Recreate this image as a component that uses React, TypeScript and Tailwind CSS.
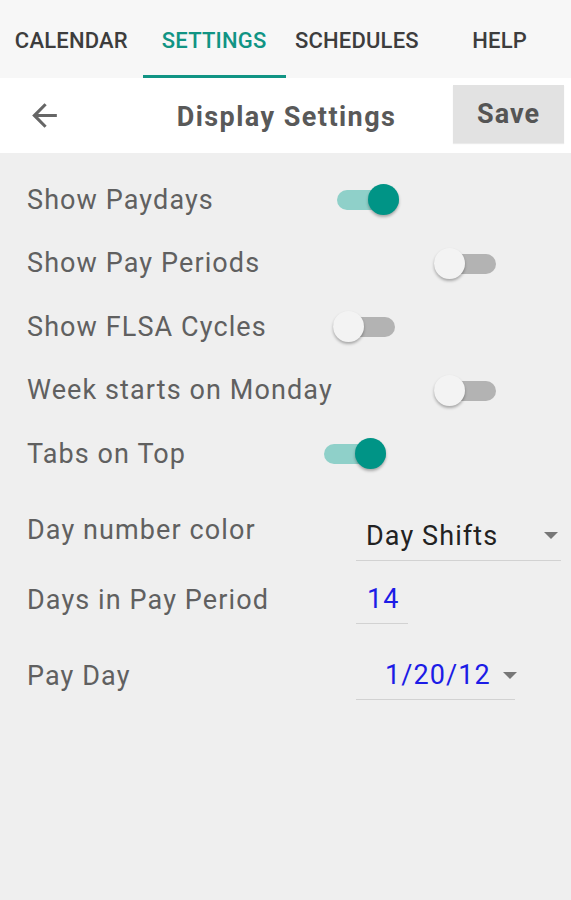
import { useState } from 'react';

const tabs = ['Calendar', 'Settings', 'Schedules', 'Help'];

const toggles = [
  { label: 'Show Paydays', on: true, w: 'w-[310px]' },
  { label: 'Show Pay Periods', on: false, w: 'w-[407px]' },
  { label: 'Show FLSA Cycles', on: false, w: 'w-[306px]' },
  { label: 'Week starts on Monday', on: false, w: 'w-[407px]' },
  { label: 'Tabs on Top', on: true, w: 'w-[297px]' },
];

function Toggle({ on, onClick }: { on: boolean; onClick: () => void }) {
  return (
    <button onClick={onClick} className="relative w-[62px] h-[31px] shrink-0">
      <span
        className={`absolute inset-x-0 top-[6px] h-[20px] rounded-full ${on ? 'bg-[#8fd0c9]' : 'bg-[#b3b3b3]'}`}
      />
      <span
        className={`absolute top-0 w-[31px] h-[31px] rounded-full shadow-[0_2px_3px_rgba(0,0,0,0.3)] ${
          on ? 'right-0 bg-[#009486]' : 'left-0 bg-[#f3f3f3]'
        }`}
      />
    </button>
  );
}

function Caret() {
  return (
    <svg width="14" height="8" viewBox="0 0 14 8" className="shrink-0">
      <path d="M0 0h14L7 7z" fill="#777" />
    </svg>
  );
}

export default function App() {
  const [state, setState] = useState(toggles.map((t) => t.on));

  return (
    <div className="w-[571px] h-[900px] bg-[#efefef] font-['Roboto',sans-serif] overflow-hidden">
      {/* tab bar */}
      <div className="grid grid-cols-4 h-[78px] bg-[#f7f7f7]">
        {tabs.map((t, i) => (
          <div key={t} className="relative flex items-center justify-center pt-[3px]">
            <span
              className={`text-[22px] font-medium uppercase tracking-[0.2px] ${
                i === 1 ? 'text-[#119484]' : 'text-[#3d3d3d]'
              }`}
            >
              {t}
            </span>
            {i === 1 && <div className="absolute bottom-0 inset-x-0 h-[3px] bg-[#119484]" />}
          </div>
        ))}
      </div>

      {/* toolbar */}
      <div className="flex items-center h-[75px] bg-white pr-[7px]">
        <div className="w-[120px] pl-[26px] flex items-center">
          <svg width="37" height="37" viewBox="0 0 24 24">
            <path d="M20 11H7.83l5.59-5.59L12 4l-8 8 8 8 1.41-1.41L7.83 13H20v-2z" fill="#666" />
          </svg>
        </div>
        <div className="flex-1 text-center text-[27px] font-bold tracking-[1.45px] text-[#595959] pt-[3px]">
          Display Settings
        </div>
        <button className="w-[111px] h-[58px] bg-[#e2e2e2] text-[27px] font-bold tracking-[1px] text-[#555] mb-[3px] shadow-[0_1px_1px_rgba(0,0,0,0.08)]">
          Save
        </button>
      </div>

      {/* switches */}
      <div className="pt-[15px]">
        {toggles.map((t, i) => (
          <div key={t.label} className="flex items-center h-[63.5px] px-[27px]">
            <span className={`${t.w} shrink-0 text-[27px] tracking-[1.1px] text-[#606060]`}>{t.label}</span>
            <Toggle
              on={state[i]}
              onClick={() => setState((s) => s.map((v, j) => (j === i ? !v : v)))}
            />
          </div>
        ))}
      </div>

      {/* value rows */}
      <div className="px-[27px] pt-[24px] text-[27px] tracking-[1.1px]">
        <div className="flex items-center">
          <span className="w-[329px] shrink-0 text-[#606060] mb-[10px]">Day number color</span>
          <div className="flex items-center shrink-0 w-[205px] h-[51px] border-b border-[#d2d2d2] pl-[10px] pr-[3px] pt-[3px]">
            <span className="flex-1 text-[#222]">Day Shifts</span>
            <Caret />
          </div>
        </div>
        <div className="flex items-center mt-[16px]">
          <span className="w-[329px] shrink-0 text-[#606060]">Days in Pay Period</span>
          <div className="flex items-center shrink-0 w-[52px] h-[47px] border-b border-[#d2d2d2] pl-[11px]">
            <span className="text-[#1c1ce6]">14</span>
          </div>
        </div>
        <div className="flex items-center mt-[29px]">
          <span className="w-[329px] shrink-0 text-[#606060]">Pay Day</span>
          <div className="flex items-center shrink-0 w-[159px] h-[47px] border-b border-[#d2d2d2] pl-[29px] gap-[12px]">
            <span className="text-[#1c1ce6]">1/20/12</span>
            <Caret />
          </div>
        </div>
      </div>
    </div>
  );
}
